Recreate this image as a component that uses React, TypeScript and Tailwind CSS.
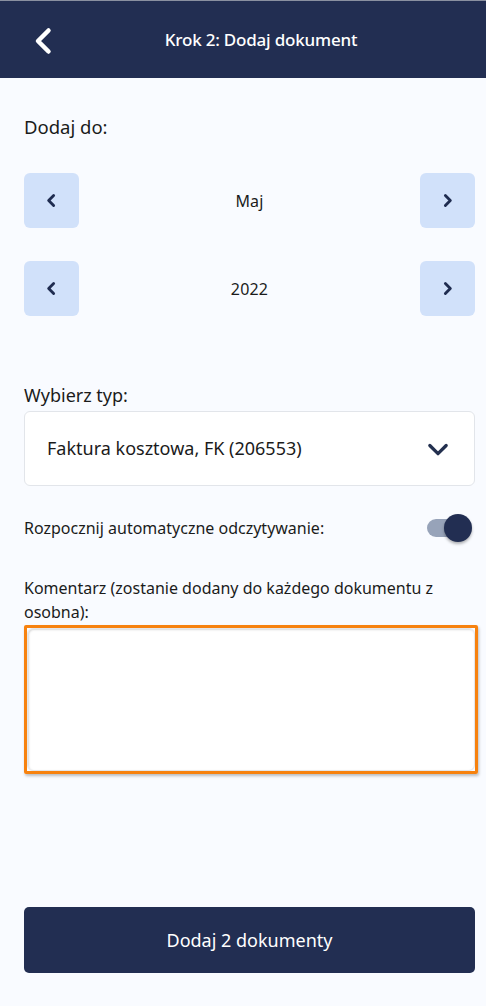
import React from "react";

const Chevron = ({ dir, className }: { dir: "left" | "right" | "down"; className?: string }) => {
  const d = dir === "left" ? "M15 5 L8 12 L15 19" : dir === "right" ? "M9 5 L16 12 L9 19" : "M5 9 L12 16 L19 9";
  return (
    <svg viewBox="0 0 24 24" className={className} fill="none" stroke="currentColor" strokeLinecap="round" strokeLinejoin="round">
      <path d={d} />
    </svg>
  );
};

const Stepper = ({ label }: { label: string }) => (
  <div className="flex items-center justify-between">
    <button className="w-[55px] h-[55px] rounded-[6px] bg-[#d1e1fa] flex items-center justify-center text-[#1f2c50]">
      <Chevron dir="left" className="w-[17px] h-[17px] [stroke-width:4]" />
    </button>
    <span className="text-[16px] text-[#1b1b1b] tracking-[0.2px]">{label}</span>
    <button className="w-[55px] h-[55px] rounded-[6px] bg-[#d1e1fa] flex items-center justify-center text-[#1f2c50]">
      <Chevron dir="right" className="w-[17px] h-[17px] [stroke-width:4]" />
    </button>
  </div>
);

export default function App() {
  return (
    <div className="w-[486px] h-[1006px] bg-[#f9fbff] flex flex-col" style={{ fontFamily: '"Noto Sans", "Open Sans", sans-serif' }}>
      <header className="h-[78px] bg-[#222e52] border-t border-[#8a90a0] flex items-center relative shrink-0">
        <button className="absolute left-[26px] top-[22px] w-[36px] h-[36px] flex items-center justify-center text-white">
          <Chevron dir="left" className="w-[36px] h-[36px] [stroke-width:3]" />
        </button>
        <h1 className="flex-1 text-center pl-[36px] text-white text-[17px] font-medium tracking-[-0.2px]">Krok 2: Dodaj dokument</h1>
      </header>

      <main className="flex-1 flex flex-col pl-[24px] pr-[11px]">
        <p className="mt-[36px] text-[18.5px] text-[#1b1b1b] leading-[26px]">Dodaj do:</p>
        <div className="mt-[33px] flex flex-col gap-[33px]">
          <Stepper label="Maj" />
          <Stepper label="2022" />
        </div>

        <p className="mt-[67px] text-[18px] text-[#1b1b1b] leading-[24px]">Wybierz typ:</p>
        <div className="mt-[4px] h-[75px] bg-white border border-[#e2e5ea] rounded-[6px] flex items-center justify-between pl-[22px] pr-[22px]">
          <span className="text-[18px] text-[#1b1b1b]">Faktura kosztowa, FK (206553)</span>
          <Chevron dir="down" className="w-[28px] h-[28px] text-[#23304f] [stroke-width:2.8]" />
        </div>

        <div className="mt-[27px] flex items-center justify-between">
          <span className="text-[16px] text-[#1b1b1b]">Rozpocznij automatyczne odczytywanie:</span>
          <div className="relative w-[45px] h-[30px] mr-[3px]">
            <div className="absolute left-[0px] top-[6px] w-[34px] h-[18px] rounded-full bg-[#97a3b9]" />
            <div className="absolute right-[0px] top-[1px] w-[28px] h-[28px] rounded-full bg-[#222e52] shadow-[0_2px_3px_rgba(0,0,0,0.3)]" />
          </div>
        </div>

        <p className="mt-[33px] text-[16px] text-[#1b1b1b] leading-[24px]">Komentarz (zostanie dodany do każdego dokumentu z osobna):</p>
        <div className="mt-[1px] -mr-[3px] border-[3px] border-[#f7820f] rounded-[2px] h-[149px] shadow-[1px_2px_3px_rgba(0,0,0,0.25)]">
          <textarea className="w-full h-full bg-white rounded-[6px] border border-[#e4e6ea] resize-none outline-none shadow-[inset_1px_1px_2px_rgba(0,0,0,0.15)]" />
        </div>

        <div className="flex-1" />
        <button className="mb-[33px] h-[66px] rounded-[5px] bg-[#222e52] text-white text-[18px]">Dodaj 2 dokumenty</button>
      </main>
    </div>
  );
}
